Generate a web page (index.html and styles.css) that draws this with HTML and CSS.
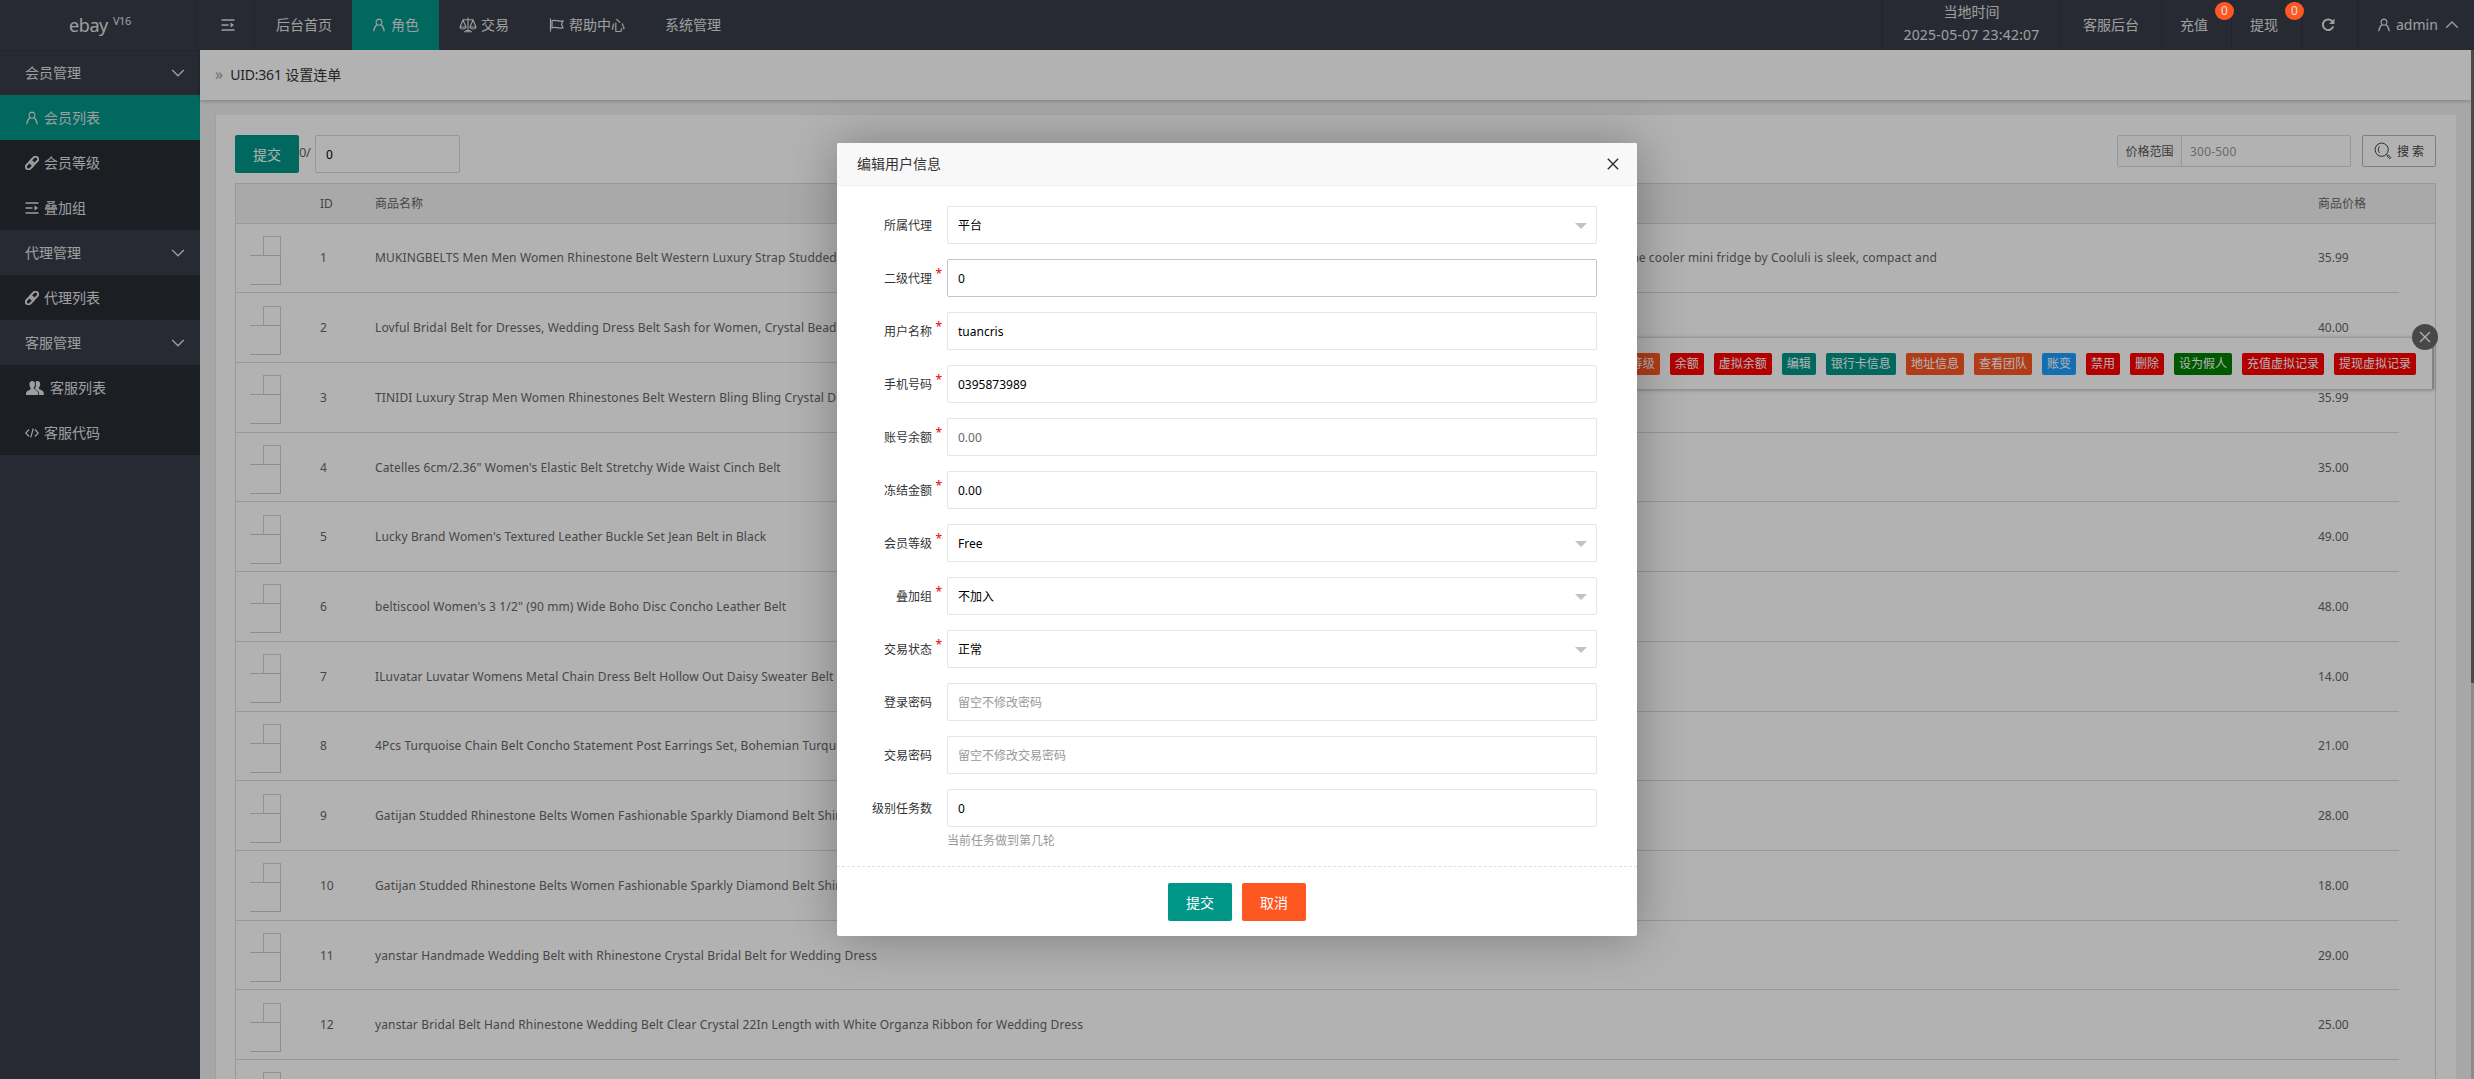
FILE: index.html
```html
<!DOCTYPE html>
<html lang="zh-CN">
<head>
    <meta charset="UTF-8">
    <meta name="viewport" content="width=device-width, initial-scale=1.0">
    <title>ebay</title>
    <link rel="stylesheet" href="styles.css">
</head>
<body>

    <!-- Icons -->
    <svg class="sprite">
        <symbol id="i-user" viewBox="0 0 14 14"><path d="M7 1.2a3 3 0 0 1 1.9 5.3c-.9.8-2.900.8-3.800 0A3 3 0 0 1 7 1.200zM5 6.800C3.200 8 2.200 10 1.800 12.800M9 6.800c1.800 1.200 2.800 3.200 3.200 6" fill="none" stroke="currentColor" stroke-width="1.2" stroke-linecap="round"/></symbol>
        <symbol id="i-menu" viewBox="0 0 14 14"><path d="M.5 2h13M.5 7h7M.5 12h13" stroke="currentColor" stroke-width="1.500"/><path d="M9.500 4.600l3.500 2.400-3.500 2.400z" fill="currentColor"/></symbol>
        <symbol id="i-link" viewBox="1 1.100 12 12"><g fill="none" stroke="currentColor" stroke-width="1.700"><rect x="6.700" y="1.200" width="4.400" height="7.600" rx="2.200" transform="rotate(45 8.900 5)"/><rect x="2.900" y="5.400" width="4.400" height="7.600" rx="2.200" transform="rotate(45 5.100 9.200)"/></g></symbol>
        <symbol id="i-users" viewBox="0 0 18 14"><path d="M6.200 0c2 0 2.900 1.500 2.800 3.300-.1 1.500-.6 2.600-1.300 3.400 0 2.300 3.700 1.900 4.300 4.900l.2 2.400H0c0-1.500 0-2.700.8-3.400 1.500-1.300 3.900-1.400 3.900-3.800C3.900 6 3.500 5 3.400 3.400 3.300 1.400 4.400 0 6.200 0z" fill="currentColor"/><path d="M11.300 0c2 0 3 1.400 2.900 3.200-.1 1.500-.6 2.700-1.400 3.500 0 2.500 4 1.900 4.800 4.500l.4 2.800h-4.900c-.1-3.200-1-4.300-3.200-5.200-.5-.3-1-.6-1-1.200C9.900 6.300 10.300 3 9.500.7 10 .2 10.600 0 11.300 0z" fill="currentColor"/></symbol>
        <symbol id="i-code" viewBox="0 0 14 14"><path d="M4 3.500L.8 7 4 10.500M10 3.500L13.200 7 10 10.500M8.300 2.500l-2.600 9" fill="none" stroke="currentColor" stroke-width="1.200"/></symbol>
        <symbol id="i-down" viewBox="0 0 14 14"><path d="M1.200 4L7 9.800 12.800 4" fill="none" stroke="currentColor" stroke-width="1.300"/></symbol>
        <symbol id="i-up" viewBox="0 0 14 14"><path d="M1.200 9.800L7 4l5.800 5.800" fill="none" stroke="currentColor" stroke-width="1.300"/></symbol>
        <symbol id="i-scale" viewBox="0 0 18 16"><g fill="none" stroke="currentColor" stroke-width="1.100"><path d="M9 .5v13.500M3.500 2.800h11M5 14.800h8M6.500 13.500h5M4 3L1 10h6zM14 3l-3 7h6zM1 10c.5 2.700 5.500 2.700 6 0M11 10c.5 2.700 5.500 2.700 6 0"/></g></symbol>
        <symbol id="i-flag" viewBox="0 0 15 14"><path d="M1.500.5v13M3 2.800c3-1.500 5.500 1.300 11 0L12.500 6.300l1.500 3.500c-5 1.200-8-1.400-11 0z" fill="none" stroke="currentColor" stroke-width="1.200"/></symbol>
        <symbol id="i-refresh" viewBox="0 0 14 14"><path d="M11.600 3.800A5.300 5.300 0 1 0 12.200 8.400" fill="none" stroke="currentColor" stroke-width="2"/><path d="M13.500.6v5.400H8z" fill="currentColor"/></symbol>
        <symbol id="i-search" viewBox="0 0 18 18"><g fill="none" stroke="currentColor"><circle cx="7.700" cy="7.700" r="6.600"/><path d="M5.500 4.500C4 6 4 9 5.500 10.800M12.300 12.300l1.500 1.500M13.200 14.200l1.200-1.200 2.500 2.700-1 1z"/></g></symbol>
    </svg>

    <header class="header">
        <div class="logo">ebay<sup>V16</sup></div>
        <a class="toggle"><svg class="ico"><use href="#i-menu"/></svg></a>
        <nav class="nav">
            <a>后台首页</a>
            <a class="active"><svg class="ico"><use href="#i-user"/></svg>角色</a>
            <a><svg class="ico scale"><use href="#i-scale"/></svg>交易</a>
            <a><svg class="ico flag"><use href="#i-flag"/></svg>帮助中心</a>
            <a>系统管理</a>
        </nav>
        <div class="tools">
            <div class="clock"><span>当地时间</span><span class="date">2025-05-07 23:42:07</span></div>
            <a class="service">客服后台</a>
            <a class="money">充值<i class="badge">0</i></a>
            <a class="money">提现<i class="badge">0</i></a>
            <a class="refresh"><svg class="ico"><use href="#i-refresh"/></svg></a>
            <a class="account"><svg class="ico"><use href="#i-user"/></svg><span>admin</span><svg class="ico arrow"><use href="#i-up"/></svg></a>
        </div>
    </header>

    <div class="layout">
        <aside class="side">
            <div class="group">会员管理<svg class="ico"><use href="#i-down"/></svg></div>
            <a class="active"><svg class="ico"><use href="#i-user"/></svg>会员列表</a>
            <a><svg class="ico"><use href="#i-link"/></svg>会员等级</a>
            <a><svg class="ico"><use href="#i-menu"/></svg>叠加组</a>
            <div class="group">代理管理<svg class="ico"><use href="#i-down"/></svg></div>
            <a><svg class="ico"><use href="#i-link"/></svg>代理列表</a>
            <div class="group">客服管理<svg class="ico"><use href="#i-down"/></svg></div>
            <a><svg class="ico users"><use href="#i-users"/></svg>客服列表</a>
            <a><svg class="ico"><use href="#i-code"/></svg>客服代码</a>
        </aside>

        <main class="main">
            <div class="title"><span class="raquo">»</span><span class="uid">UID:361</span> 设置连单</div>
            <div class="card">
                <div class="toolbar">
                    <button class="btn">提交</button>
                    <span class="count">0/</span>
                    <input class="input num" value="0">
                    <div class="search">
                        <label>价格范围</label>
                        <input placeholder="300-500">
                    </div>
                    <button class="btn-search"><svg><use href="#i-search"/></svg>搜 索</button>
                </div>
                <div class="table">
                    <div class="thead"><span class="c-id">ID</span><span class="c-name">商品名称</span><span class="c-price">商品价格</span></div>
                    <div id="rows"></div>
                </div>
            </div>
        </main>
        <div class="scrollbar"><div class="thumb"></div></div>
    </div>

    <!-- Row action popup -->
    <div class="tips">
        <span class="tag orange">等级</span>
        <span class="tag red">余额</span>
        <span class="tag red">虚拟余额</span>
        <span class="tag teal">编辑</span>
        <span class="tag teal">银行卡信息</span>
        <span class="tag orange">地址信息</span>
        <span class="tag orange">查看团队</span>
        <span class="tag blue">账变</span>
        <span class="tag red">禁用</span>
        <span class="tag red">删除</span>
        <span class="tag green">设为假人</span>
        <span class="tag red">充值虚拟记录</span>
        <span class="tag red">提现虚拟记录</span>
        <span class="tips-close"><svg viewBox="0 0 12 12"><path d="M1 1l10 10M11 1L1 11" stroke="currentColor" stroke-width="1.3"/></svg></span>
    </div>

    <!-- Edit user dialog -->
    <div class="mask">
        <form class="dialog">
            <div class="dialog-title">编辑用户信息<svg viewBox="0 0 12 12"><path d="M.8.8l10.400 10.400M11.200.8L.8 11.200" stroke="currentColor" stroke-width="1.4"/></svg></div>
            <div class="dialog-body">
                <div class="item"><label>所属代理</label><div class="select">平台</div></div>
                <div class="item required"><label>二级代理</label><input class="input focus" value="0"></div>
                <div class="item required"><label>用户名称</label><input class="input" value="tuancris"></div>
                <div class="item required"><label>手机号码</label><input class="input" value="0395873989"></div>
                <div class="item required"><label>账号余额</label><input class="input muted" value="0.00"></div>
                <div class="item required"><label>冻结金额</label><input class="input" value="0.00"></div>
                <div class="item required"><label>会员等级</label><div class="select">Free</div></div>
                <div class="item required"><label>叠加组</label><div class="select">不加入</div></div>
                <div class="item required"><label>交易状态</label><div class="select">正常</div></div>
                <div class="item"><label>登录密码</label><input class="input" placeholder="留空不修改密码"></div>
                <div class="item"><label>交易密码</label><input class="input" placeholder="留空不修改交易密码"></div>
                <div class="item"><label>级别任务数</label><input class="input" value="0"></div>
                <p class="hint">当前任务做到第几轮</p>
            </div>
            <div class="dialog-foot">
                <button type="button" class="btn">提交</button>
                <button type="button" class="btn btn-danger">取消</button>
            </div>
        </form>
    </div>

    <script>
        const goods = [
            ['MUKINGBELTS Men Men Women Rhinestone Belt Western Luxury Strap Studded Belt', '35.99', 'The cooler mini fridge by Cooluli is sleek, compact and'],
            ['Lovful Bridal Belt for Dresses, Wedding Dress Belt Sash for Women, Crystal Beaded', '40.00'],
            ['TINIDI Luxury Strap Men Women Rhinestones Belt Western Bling Bling Crystal Diamond', '35.99'],
            ['Catelles 6cm/2.36" Women\'s Elastic Belt Stretchy Wide Waist Cinch Belt', '35.00'],
            ['Lucky Brand Women\'s Textured Leather Buckle Set Jean Belt in Black', '49.00'],
            ['beltiscool Women\'s 3 1/2" (90 mm) Wide Boho Disc Concho Leather Belt', '48.00'],
            ['ILuvatar Luvatar Womens Metal Chain Dress Belt Hollow Out Daisy Sweater Belt Body', '14.00'],
            ['4Pcs Turquoise Chain Belt Concho Statement Post Earrings Set, Bohemian Turquoise', '21.00'],
            ['Gatijan Studded Rhinestone Belts Women Fashionable Sparkly Diamond Belt Shiny', '28.00'],
            ['Gatijan Studded Rhinestone Belts Women Fashionable Sparkly Diamond Belt Shiny', '18.00'],
            ['yanstar Handmade Wedding Belt with Rhinestone Crystal Bridal Belt for Wedding Dress', '29.00'],
            ['yanstar Bridal Belt Hand Rhinestone Wedding Belt Clear Crystal 22In Length with White Organza Ribbon for Wedding Dress', '25.00'],
            ['', '']
        ];

        document.getElementById('rows').innerHTML = goods.map((g, i) => `
            <div class="row">
                <span class="check"><i></i><b></b></span>
                <span class="c-id">${g[0] ? i + 1 : ''}</span>
                <span class="c-name"><span>${g[0]}</span>${g[2] ? `<span>${g[2]}</span>` : ''}</span>
                <span class="c-price">${g[1]}</span>
            </div>`).join('');
    </script>

</body>
</html>
```
FILE: styles.css
```css
* {
    box-sizing: border-box;
}
body {
    margin: 0;
    height: 1079px;
    overflow: hidden;
    position: relative;
    font: 14px/24px "Noto Sans", "Noto Sans CJK SC", sans-serif;
    color: #333;
    background: #f0f0f0;
}
input, button {
    font-family: inherit;
    margin: 0;
    outline: none;
}
.sprite {
    display: none;
}
.ico {
    width: 14px;
    height: 14px;
    flex: none;
}

/* header */
.header {
    display: flex;
    height: 50px;
    background: #393d49;
    color: #e2e2e4;
}
.header a {
    display: flex;
    align-items: center;
    justify-content: center;
    color: #e2e2e4;
}
.logo {
    width: 197px;
    padding: 13px 0 0 69px;
    font-size: 18px;
    letter-spacing: -0.4px;
    border-right: 1px solid #333640;
}
.logo sup {
    font-size: 11px;
    line-height: 10px;
    margin-left: 5px;
    vertical-align: 7px;
}
.toggle {
    width: 58px;
    padding-left: 4px;
    border-right: 1px solid #333640;
}
.nav {
    display: flex;
    flex: 1;
}
.nav a {
    padding: 0 20px;
}
.nav a:first-child {
    padding-left: 21px;
}
.nav .ico {
    margin-right: 5px;
}
.nav .scale {
    width: 18px;
    height: 16px;
    margin-right: 4px;
}
.nav .flag {
    width: 15px;
    margin-right: 5px;
}
.active {
    background: #009688;
}
.tools {
    display: flex;
}
.tools > * {
    border-left: 1px solid #333640;
}
.clock {
    display: flex;
    flex-direction: column;
    width: 178px;
    text-align: center;
}
.date {
    margin-top: -1px;
    letter-spacing: 0.2px;
}
.tools .service {
    width: 101px;
}
.tools .money {
    width: 70px;
    position: relative;
    justify-content: flex-start;
    padding-left: 18px;
}
.badge {
    position: absolute;
    top: 2px;
    left: 53px;
    width: 19px;
    height: 18px;
    border-radius: 9px;
    background: #ff5722;
    font: 12px/18px "Noto Sans", sans-serif;
    text-align: center;
    z-index: 1;
}
.tools .refresh {
    width: 56px;
    padding-right: 4px;
}
.tools .account {
    width: 117px;
    justify-content: flex-start;
    padding-left: 19px;
}
.account span {
    margin: 0 7px 0 5px;
}

/* side menu */
.layout {
    display: flex;
    height: 1029px;
    overflow: hidden;
}
.side {
    width: 200px;
    background: #393d49;
    color: #e2e2e4;
    border-top: 1px solid #333640;
}
.side a, .group {
    display: flex;
    align-items: center;
    height: 45px;
    padding: 0 25px;
}
.group:first-child {
    height: 44px;
}
.group {
    padding-right: 15px;
    justify-content: space-between;
}
.side a:not(.active) {
    background: #282b33;
}
.side a .ico {
    margin-right: 5px;
}
.side a .users {
    width: 18px;
    margin: 0 6px 0 1px;
}

/* content */
.main {
    flex: 1;
    min-width: 0;
}
.title {
    height: 50px;
    padding-left: 15px;
    line-height: 48px;
    background: #fff;
    color: #333;
    box-shadow: 0 1px 4px rgba(0, 0, 0, 0.25);
}
.raquo {
    margin-right: 7px;
    font-size: 16px;
    color: #999;
}
.uid {
    letter-spacing: -0.2px;
}
.card {
    height: 1100px;
    margin: 15px 15px 0;
    padding: 20px 20px 20px 19px;
    background: #fff;
    border-left: 1px solid #e6e6e6;
}
.toolbar {
    display: flex;
    height: 48px;
    align-items: flex-start;
}
.btn {
    width: 64px;
    height: 38px;
    padding: 0;
    border: 0;
    border-radius: 2px;
    background: #009688;
    color: #fff;
    font-size: 14px;
}
.count {
    width: 16px;
    padding-top: 5px;
    color: #666;
    font-size: 13px;
    letter-spacing: -0.5px;
}
.input {
    height: 38px;
    padding: 0 10px;
    border: 1px solid #e6e6e6;
    border-radius: 2px;
    background: #fff;
    font-size: 12px;
    color: #000;
}
.num {
    width: 145px;
    padding-top: 1px;
    border-color: #d8d8d8;
}
.search {
    display: flex;
    width: 234px;
    height: 32px;
    margin: 0 11px 0 auto;
    border: 1px solid #d8d8d8;
    border-radius: 2px;
    font-size: 12px;
    color: #555;
}
.search label {
    width: 64px;
    line-height: 32px;
    text-align: center;
    background: #fbfbfb;
    border-right: 1px solid #d8d8d8;
}
.search input {
    width: 165px;
    padding: 0 8px;
    border: 0;
    font-size: 12px;
    letter-spacing: 0.2px;
}
input::placeholder {
    color: #999;
    opacity: 1;
}
.btn-search {
    display: flex;
    align-items: center;
    width: 74px;
    height: 32px;
    padding: 0 11px;
    border: 1px solid #b5b5b5;
    border-radius: 2px;
    background: #fff;
    color: #444;
    font-size: 12px;
    white-space: nowrap;
}
.btn-search svg {
    width: 18px;
    height: 18px;
    margin-right: 5px;
    flex: none;
}

/* goods table */
.table {
    border: 1px solid #dcdcdc;
    font-size: 12px;
    line-height: 20px;
    color: #666;
    height: 1000px;
    overflow: hidden;
}
.thead, .row {
    display: flex;
    align-items: center;
}
.thead {
    height: 39.5px;
    padding: 1px 0 0 84px;
    background: #f2f2f2;
    border-bottom: 1px solid #dcdcdc;
}
.row {
    width: 2163px;
    height: 69.73px;
    padding-top: 1px;
    border-bottom: 1px solid #dcdcdc;
}
.c-id {
    width: 55px;
}
.c-name {
    width: 1943px;
    white-space: nowrap;
}
.row .c-name {
    display: flex;
    justify-content: space-between;
    width: 1562px;
    margin-right: 381px;
    letter-spacing: 0.13px;
}
.c-price {
    width: 80px;
}
.check {
    display: flex;
    flex-direction: column;
    align-items: flex-end;
    width: 45px;
    margin-right: 39px;
    padding-top: 4px;
}
.check i {
    width: 18px;
    height: 19px;
    border: 1px solid #d2d2d2;
    border-bottom: 0;
}
.check b {
    width: 31px;
    height: 30px;
    border: 1px solid #ccc;
    border-left: 0;
}
.scrollbar {
    width: 3px;
    background: #c8c8c8;
}
.thumb {
    height: 633px;
    background: #686868;
}

/* action popup */
.tips {
    position: absolute;
    top: 337px;
    right: 40px;
    display: flex;
    justify-content: flex-end;
    gap: 10px;
    width: 960px;
    height: 52px;
    padding: 15px 16px 0 0;
    background: #fff;
    border-top: 1px solid #dcdcdc;
    border-right: 2px solid #bbb;
    box-shadow: 0 1px 4px rgba(0, 0, 0, 0.3);
}
.tag {
    height: 22px;
    padding: 0 5px;
    border-radius: 2px;
    color: #fff;
    font-size: 12px;
    line-height: 22px;
    white-space: nowrap;
}
.orange { background: #ff5722; }
.red { background: #f00; }
.teal { background: #009688; }
.blue { background: #1e9fff; }
.green { background: #008000; }
.tips-close {
    position: absolute;
    top: -14px;
    right: -6px;
    width: 26px;
    height: 26px;
    border-radius: 50%;
    background: #68676b;
    color: #fff;
    display: flex;
    align-items: center;
    justify-content: center;
}
.tips-close svg {
    width: 12px;
    height: 12px;
}

/* dialog */
.mask {
    position: absolute;
    inset: 0;
    display: flex;
    align-items: center;
    justify-content: center;
    background: rgba(0, 0, 0, 0.3);
}
.dialog {
    width: 800px;
    height: 793px;
    background: #fff;
    border-radius: 2px;
    box-shadow: 1px 1px 50px rgba(0, 0, 0, 0.3);
}
.dialog-title {
    display: flex;
    align-items: center;
    justify-content: space-between;
    height: 43px;
    padding: 0 18px 0 20px;
    background: #f8f8f8;
    border-bottom: 1px solid #eee;
    border-radius: 2px 2px 0 0;
    color: #333;
}
.dialog-title svg {
    width: 12px;
    height: 12px;
    color: #2d2c3b;
}
.dialog-body {
    height: 680px;
    padding: 20px 40px 0 0;
    font-size: 12px;
}
.item {
    display: flex;
    height: 38px;
    margin-bottom: 15px;
}
.item label {
    position: relative;
    width: 110px;
    padding-right: 15px;
    line-height: 40px;
    text-align: right;
}
.required label::after {
    content: "*";
    position: absolute;
    top: -5px;
    right: 5px;
    color: #e00;
}
.item .input, .select {
    flex: 1;
}
.item .input {
    padding-top: 1px;
}
.item .focus {
    border-color: #c4c4c8;
}
.item .muted {
    color: #666;
}
.select {
    display: flex;
    align-items: center;
    justify-content: space-between;
    padding: 1px 9px 0 10px;
    border: 1px solid #e6e6e6;
    border-radius: 2px;
    color: #000;
}
.select::after {
    content: "";
    border: 6px solid transparent;
    border-top-color: #c2c2c2;
    border-bottom: 0;
}
.hint {
    margin: -14px 0 0 110px;
    line-height: 25px;
    color: #999;
}
.dialog-foot {
    display: flex;
    justify-content: center;
    gap: 10px;
    padding-top: 16px;
    border-top: 1px dashed #e0e0e0;
}
.btn-danger {
    background: #ff5722;
}
```
